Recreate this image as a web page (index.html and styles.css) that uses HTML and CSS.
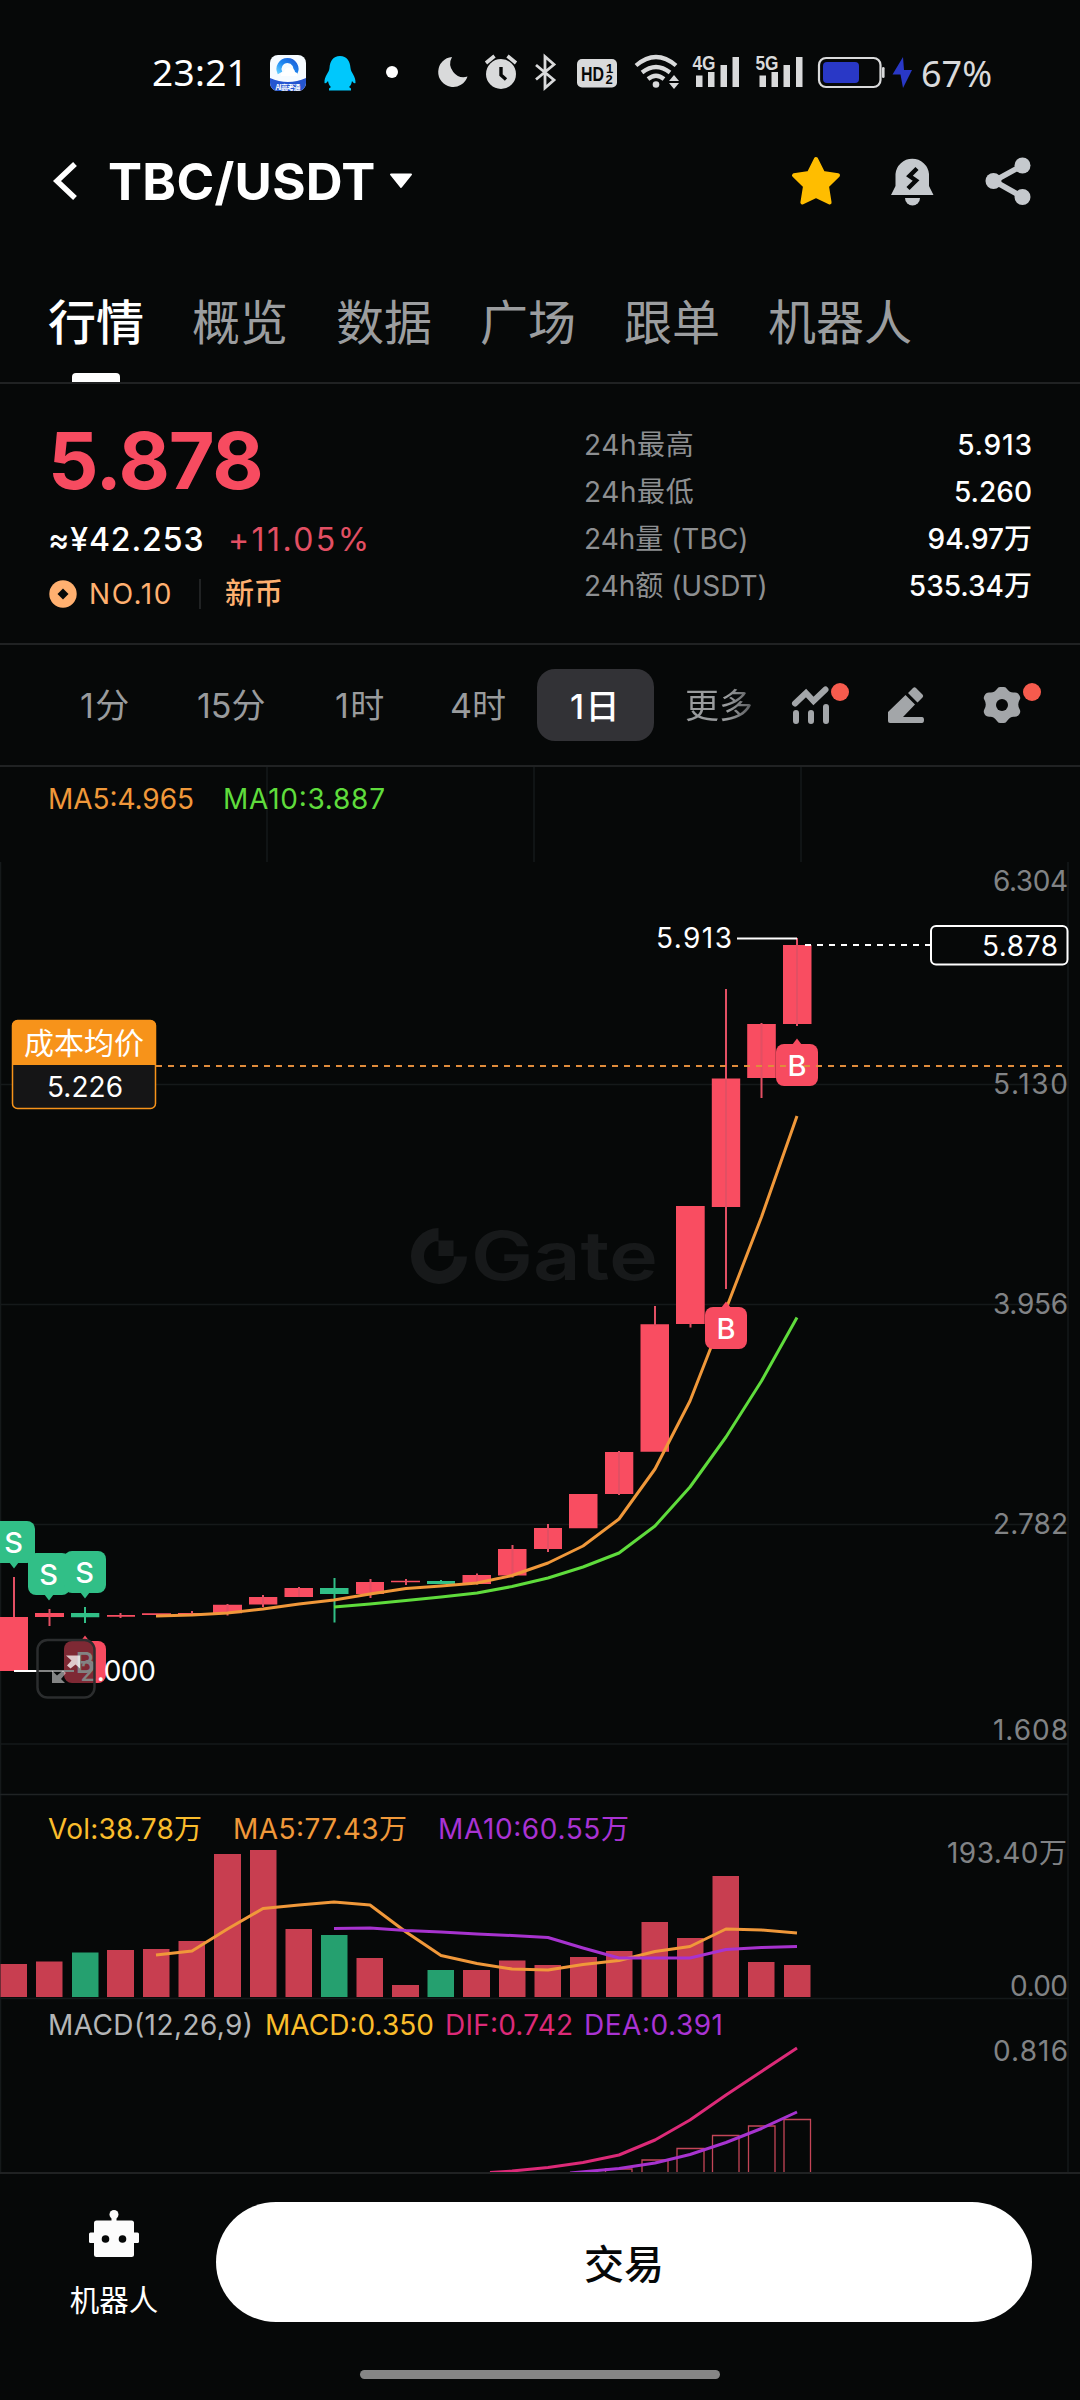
FILE: index.html
```html
<!DOCTYPE html>
<html lang="zh-CN">
<head>
<meta charset="utf-8">
<title>TBC/USDT</title>
<link rel="stylesheet" href="styles.css">
</head>
<body>
<div class="screen">
  <header class="status">
    <span class="clock">23:21</span>
    <svg class="status-icons" viewBox="260 50 660 44" width="660" height="44">
      <defs>
        <linearGradient id="ring" x1="0" y1="1" x2="1" y2="0"><stop offset="0" stop-color="#5cc8ff"/><stop offset=".5" stop-color="#1d86f0"/><stop offset="1" stop-color="#1c5fd8"/></linearGradient>
        <clipPath id="app"><rect x="270" y="55" width="36" height="36" rx="8"/></clipPath>
      </defs>
      <g clip-path="url(#app)">
        <rect x="270" y="55" width="36" height="36" fill="#f6fbff"/>
        <path d="M270 78q18 8 36 0v13h-36z" fill="#2455d0"/>
        <path d="M280 73a8.500 8.500 0 1 1 15 0" fill="none" stroke="url(#ring)" stroke-width="5"/>
        <path d="M281 76q-1-4 3-4 2-6 7-4 4 1 4 4 4 1 2 4z" fill="#fff"/>
        <text x="275.500" y="89.500" class="app-label" textLength="25">AI高考通</text>
      </g>
      <path d="M340 56c7 0 10 5 10.500 12 .4 5 5.500 8 5 15-1.500 1-2.500-1-3.500-2-.5 3-1.500 5-3 6l2 1.500v2h-22v-2l2-1.500c-1.500-1-2.500-3-3-6-1 1-2 3-3.500 2-.5-7 4.600-10 5-15C330 61 333 56 340 56z" fill="#00c8fc"/>
      <circle cx="392" cy="72" r="6" fill="#fff"/>
      <g fill="#d9dadb">
        <path d="M452 57a15 15 0 1 0 15.500 19.500A13.500 13.500 0 0 1 452 57z"/>
        <circle cx="501" cy="74" r="15"/>
        <path d="M486 63l8.500-7M516 63l-8.500-7" stroke="#d9dadb" stroke-width="3.600"/>
        <path d="M501 67v8l5 4.500" fill="none" stroke="#060808" stroke-width="3.400"/>
        <path d="M536 65l18 15-9 8V56.500l9 8-18 15" fill="none" stroke="#d9dadb" stroke-width="2.800"/>
        <rect x="577" y="59" width="40" height="28.500" rx="5"/>
        <g fill="none" stroke="#d9dadb" stroke-width="4.200">
          <path d="M636 65.500q20-17 40 0M642 72.500q14-11 28 0M648 79q8-6.500 16 0"/>
        </g>
        <circle cx="656" cy="84.500" r="3.300"/>
        <path d="M669 81l5-6 5 6zM669 83l5 6 5-6z"/>
        <path d="M696 75.500h6.500V87H696zM708 72h6.500v15H708zM720.500 65h6.500v22h-6.500zM732.500 57h6.500v30h-6.500zM759.500 75.500h6.500V87h-6.500zM771.500 72h6.500v15h-6.500zM783.500 65h6.500v22h-6.500zM796 57h6.500v30H796z"/>
        <text x="692.500" y="69.500" class="net" textLength="23" lengthAdjust="spacingAndGlyphs">4G</text>
        <text x="755.500" y="69.500" class="net" textLength="23" lengthAdjust="spacingAndGlyphs">5G</text>
      </g>
      <text x="581" y="81" class="hd" textLength="23" lengthAdjust="spacingAndGlyphs">HD</text>
      <text x="606" y="73" class="hd-num">1</text><text x="605.500" y="84" class="hd-num">2</text>
      <rect x="819" y="58" width="61.500" height="29" rx="7" fill="none" stroke="#d9dadb" stroke-width="2.200"/>
      <rect x="823" y="62" width="36" height="21" rx="4" fill="#2938c6"/>
      <rect x="882" y="67" width="2.600" height="11" rx="1.300" fill="#d9dadb"/>
      <path d="M903 57l-10.500 17.500h8L903 88l9-18h-8z" fill="#2938c6"/>
    </svg>
    <span class="percent">67%</span>
  </header>

  <nav class="titlebar">
    <svg class="back" viewBox="0 0 28 42" width="28" height="42"><path d="M24 4L6 21l18 17" fill="none" stroke="#fff" stroke-width="5.500"/></svg>
    <h1 class="pair">TBC/USDT</h1>
    <svg class="caret" viewBox="0 0 24 16" width="24" height="16"><path d="M2 1.500h20L12 14z" fill="#fff" stroke="#fff" stroke-width="2" stroke-linejoin="round"/></svg>
    <svg class="star" viewBox="0 0 50 50" width="50" height="50"><path d="M25 3l7 14 15 2.300-11 10.900 2.600 16.300L25 40l-13.600 6.500L14 30.200 3 19.300 18 17z" fill="#ffbd00" stroke="#ffbd00" stroke-width="4" stroke-linejoin="round"/></svg>
    <svg class="bell" viewBox="0 0 44 50" width="44" height="50"><path d="M5.500 18a16.800 16.500 0 0 1 33.500 0v12l4.500 9H1l4.500-9z" fill="#c5c9cd"/><path d="M15 42h15a7.500 7.500 0 0 1-15 0z" fill="#c5c9cd"/><path d="M27 12.500L19.500 20l6.500 4.500-8 8" fill="none" stroke="#060808" stroke-width="4.400"/></svg>
    <svg class="share" viewBox="0 0 46 50" width="46" height="50"><path d="M37.500 9.500L9 25l28.500 16" fill="none" stroke="#c5c9cd" stroke-width="5.500"/><g fill="#c5c9cd"><circle cx="37.500" cy="9.500" r="8"/><circle cx="8.500" cy="25" r="8"/><circle cx="37.500" cy="41" r="8"/></g></svg>
  </nav>

  <nav class="tabs">
    <span class="tab active">行情</span><span class="tab">概览</span><span class="tab">数据</span><span class="tab">广场</span><span class="tab">跟单</span><span class="tab">机器人</span>
  </nav>

  <section class="summary">
    <div class="quote">
      <div class="price">5.878</div>
      <div class="sub"><span class="fiat">≈¥42.253</span><span class="change">+11.05%</span></div>
      <div class="tags">
        <svg viewBox="0 0 28 28" width="28" height="28"><circle cx="14" cy="14" r="13.700" fill="#ffb070"/><path d="M14 8.500l5.500 5.500-5.500 5.500L8.500 14z" fill="#060808"/></svg>
        <span class="rank">NO.10</span><i class="divider"></i><span class="fresh">新币</span>
      </div>
    </div>
    <dl class="stats">
      <div><dt>24h最高</dt><dd class="wide">5.913</dd></div>
      <div><dt>24h最低</dt><dd>5.260</dd></div>
      <div><dt>24h量 (TBC)</dt><dd>94.97万</dd></div>
      <div><dt>24h额 (USDT)</dt><dd>535.34万</dd></div>
    </dl>
  </section>

  <section class="periods">
    <span class="period p1">1分</span><span class="period p2">15分</span><span class="period p3">1时</span><span class="period p4">4时</span><span class="period on">1日</span><span class="period more">更多</span>
    <svg class="tools" viewBox="780 675 270 60" width="270" height="60">
      <g fill="none" stroke="#a3a6a9" stroke-width="6" stroke-linecap="round" stroke-linejoin="miter">
        <path d="M795 703.500l11-10.500 7.500 8 12-11.500"/>
        <path d="M796 713v8M811 713v8M826 707v14"/>
      </g>
      <circle cx="840" cy="692" r="9" fill="#f65b4d"/>
      <path d="M888 712l17.500-17 9.500 9.500-12 12.500h19q2 0 2 3t-2 3h-32q-2 0-2-2zM908 693l5-5q1.500-1.500 3 0l6.500 6.500q1.500 1.500 0 3l-5 5z" fill="#a3a6a9"/>
      <path d="M997 689q1-2 3-2h4q2 0 3 2 3 4 7 3.500 4-.5 5.500 3 1.500 2.500 0 4.500-2.500 4.500 0 9 1.500 2.500 0 5-1.500 3-5.500 2.700-4-.2-7 4.300-1 2-3 2h-4q-2 0-3-2-3-4.500-7-4.300-4 .3-5.500-2.700-1.500-2.500 0-5 2.500-4.500 0-9-1.500-2 0-4.500 1.500-3.500 5.500-3 4 .5 7-3.500z" fill="#a3a6a9"/>
      <circle cx="1002" cy="705" r="6" fill="#060808"/>
      <circle cx="1032" cy="692" r="9" fill="#f65b4d"/>
    </svg>
  </section>

  <svg class="chart" viewBox="0 767 1080 1405" width="1080" height="1405">
    <g class="grid">
      <path d="M267 767v95M534 767v95M801 767v95M.5 862v1310M1068 862v1310M0 1084.500h1068M0 1304.500h1068M0 1524.500h1068M0 1744h1068M0 1998.500h1068"/>
      <path d="M0 1794.500h1068" class="strong"/>
    </g>
    <g class="mark">
      <path d="M438.500 1228a28 28 0 1 0 28.500 28.500h-13a15 15 0 1 1-15.500-15.500zM438.500 1240.500h15v15.500h-15z"/>
      <text x="471" y="1280" textLength="187" lengthAdjust="spacingAndGlyphs">Gate</text>
    </g>

    <g class="up">
      <path d="M0 1617h28v54H0zM35 1613h29v4H35zM107 1615h28v1.800h-28zM142 1613.200h29v1.800h-29zM178 1613h28v1.500h-28zM213 1604.700h29v8.600h-29zM249 1597h28.300v7.500H249zM284.500 1588h28.500v9h-28.500zM356 1582h28v12h-28zM391 1580.800h29v1.500h-29zM462.500 1575h28.500v9h-28.500zM498 1549h28.500v26.500H498zM534 1528h28v21h-28zM569 1494h28.500v34.300H569zM605 1452h28.300v42H605zM640.500 1324.300H669v127.500h-28.500zM676 1206h28.700v118H676zM711.800 1078.500h28.400v128.500h-28.400zM747.200 1024h28.600v54h-28.600zM783 945h28.500v79H783z"/>
      <path class="wick" d="M14 1577v40M49.500 1609v17M120.500 1613v5M192 1611v3M227.500 1604v11.500M263 1595v12M299 1587v10M370.500 1579v19M406 1579v6M477 1573.500v11M512.500 1545v32.500M548 1524v28M619 1451v44M655 1306v20M690.500 1322v5.500M726 989v300M761.500 1023v75M797 938v88"/>
    </g>
    <g class="down">
      <path d="M71 1613h28.300v4.300H71zM320 1588h28.500v6H320zM427 1581h28v3h-28z"/>
      <path class="wick" d="M85 1607v16M334.500 1578v44.500M441 1580v4"/>
    </g>
    <polyline class="ma5" points="156,1616 192,1615 227.5,1613 263,1609 299,1604 334,1600 370,1594 406,1588.5 441,1586 477,1583 512,1575.500 548,1563 583,1546 619,1519 655,1469 690,1401 726,1309 761.5,1217 797,1116"/>
    <polyline class="ma10" points="334,1607 370,1604 406,1600.5 441,1597 477,1593 512,1586.5 548,1578 583,1567 619,1553 655,1526 690,1487 726,1437 761.5,1381 797,1317.500"/>

    <g class="axis">
      <text x="993" y="891" textLength="75">6.304</text><text x="993" y="1094" textLength="75">5.130</text><text x="993" y="1314" textLength="75">3.956</text><text x="993" y="1534" textLength="75">2.782</text><text x="993" y="1740" textLength="75">1.608</text>
      <text x="947" y="1862.500" textLength="120">193.40万</text><text x="1010" y="1995.500" textLength="58">0.00</text><text x="993" y="2060.500" textLength="75">0.816</text>
    </g>

    <g class="legend">
      <text x="48" y="809" textLength="146" class="c-orange">MA5:4.965</text><text x="223" y="809" textLength="162" class="c-green">MA10:3.887</text>
      <text x="48" y="1839" textLength="154" class="c-gold">Vol:38.78万</text><text x="233" y="1839" textLength="174" class="c-orange">MA5:77.43万</text><text x="438" y="1839" textLength="191" class="c-violet">MA10:60.55万</text>
      <text x="48" y="2035" textLength="205" class="c-gray">MACD(12,26,9)</text><text x="265" y="2035" textLength="169" class="c-gold">MACD:0.350</text><text x="445" y="2035" textLength="128" class="c-pink">DIF:0.742</text><text x="584" y="2035" textLength="139" class="c-violet">DEA:0.391</text>
    </g>

    <g class="buy"><rect x="776" y="1044" width="42" height="42" rx="8"/><path d="M792 1045l5-6.500 5 6.500z"/><rect x="705" y="1307" width="42" height="42" rx="8"/><path d="M721 1308l5-6.500 5 6.500z"/><rect x="64" y="1641" width="42" height="42" rx="8"/><path d="M80 1642l5-6.500 5 6.500z"/></g>
    <g class="sell"><rect x="-7" y="1521" width="42" height="42" rx="8"/><path d="M9 1562l5 6.500 5-6.500z"/><rect x="28" y="1553" width="42" height="42" rx="8"/><path d="M44 1594l5 6.500 5-6.500z"/><rect x="64" y="1551" width="42" height="42" rx="8"/><path d="M80 1592l5 6.500 5-6.500z"/></g>
    <path class="cost-line" d="M156 1066H1065"/>
    <g class="letter"><text x="797" y="1076">B</text><text x="726" y="1339">B</text><text x="85" y="1673">B</text><text x="13.500" y="1552.500">S</text><text x="48.500" y="1584.500">S</text><text x="84.500" y="1582.500">S</text></g>

    <rect x="12.500" y="1020.500" width="143" height="88" rx="5" class="cost-box"/>
    <path d="M12.500 1065v-39.500q0-5 5-5h133q5 0 5 5V1065z" fill="#f7931a"/>
    <text x="24" y="1054" class="cost-title" textLength="120">成本均价</text>
    <text x="47" y="1097" class="num" textLength="76">5.226</text>

    <path d="M737 938.500h60M14 1671h60" stroke="#fff" stroke-width="2"/>
    <text x="656" y="948" class="num" textLength="76">5.913</text>
    <text x="80" y="1681" class="num" textLength="76">2.000</text>
    <path d="M805 945h125" stroke="#fff" stroke-width="2" stroke-dasharray="6 6"/>
    <rect x="931" y="926" width="136.500" height="38.500" rx="5" class="last-box"/>
    <text x="982" y="956" class="num" textLength="76">5.878</text>

    <rect x="37.500" y="1640" width="57" height="57.500" rx="10" class="expand"/>
    <path d="M66 1655.500h14v13l-4.500-4-5 4-3.500-3 4.500-5z" fill="#fff" opacity=".75"/>
    <path d="M52 1670.500v12.500h13l-4-4 5-6-3-2.500-6 5z" fill="#fff" opacity=".5"/>

    <path class="vol-up" d="M.5 1964h26.500v33H.5zM36 1961.500h26.500v35.500H36zM107 1950h27v47h-27zM143 1949h26.500v48H143zM178.500 1941H205v56h-26.500zM214 1854h27v143h-27zM250 1850h26.500v147H250zM285.500 1929H312v68h-26.500zM356.500 1958H383v39h-26.500zM392 1985h27v12h-27zM463 1970h27v27h-27zM499 1960.500h26.500v36.500H499zM534.500 1965H561v32h-26.500zM570 1957h27v40h-27zM606 1951h26.500v46H606zM641.500 1922H668v75h-26.500zM677 1938h26.500v59H677zM712.500 1876H739v121h-26.500zM748 1962h26.500v35H748zM784 1965h26.500v32H784z"/>
    <path class="vol-down" d="M72 1952.500h26.500v44.500H72zM321 1935h26.500v62H321zM427.500 1970H454v27h-26.500z"/>
    <polyline class="ma5" points="156,1955 192,1951 227.5,1929 263,1908.500 299,1905 334,1902 370,1905 406,1932 441,1955.500 477,1963.500 512,1969 548,1970 583,1964.500 619,1960.500 655,1951.500 690,1946.500 726,1929 761.5,1930 797,1933"/>
    <polyline class="violet-line" points="334,1928.500 370,1928 406,1930.500 441,1932 477,1934 512,1935.500 548,1937.500 583,1948 619,1958 655,1958 690,1958 726,1949.500 761.5,1947.500 797,1946.500"/>

    <path class="hist" d="M605.500 2175v-6H632v6M642 2175v-15h26v15M677 2175v-26.500h27V2175M712.500 2175v-39.500H739v39.500M748.500 2175v-49H775v49M784 2175v-55.500h26.500V2175"/>
    <polyline class="pink-line" points="490,2172.500 512,2171 548,2167.500 583,2162.500 619,2155 655,2140 690,2120 726,2095 761.5,2071.500 797,2048"/>
    <polyline class="violet-line" points="570,2173 619,2168.500 655,2163 690,2154.500 726,2142.500 761.5,2128.500 797,2112"/>
  </svg>

  <footer class="actions">
    <div class="robot">
      <svg viewBox="0 0 50 48" width="50" height="48"><g fill="#fcfcfc"><circle cx="25" cy="4.500" r="4.500"/><path d="M22.500 7h5v5h-5z"/><rect x="5" y="10.500" width="40" height="36.500" rx="2.500"/><rect y="22.500" width="50" height="10.500" rx="1.500"/></g><circle cx="16.500" cy="29" r="3.800" fill="#060808"/><circle cx="33.500" cy="29" r="3.800" fill="#060808"/></svg>
      <span>机器人</span>
    </div>
    <button class="trade">交易</button>
  </footer>
  <div class="home"></div>
</div>
</body>
</html>
```
FILE: styles.css
```css
* { box-sizing: border-box; margin: 0; padding: 0; }
body { background: #060808; color: #fff; font-family: Inter, "Noto Sans CJK SC", sans-serif; }
svg { display: block; flex: none; }
.screen { width: 1080px; height: 2400px; overflow: hidden; display: flex; flex-direction: column; background: #060808; }

.status { height: 144px; display: flex; align-items: center; padding-left: 152px; flex: none; }
.clock { width: 108px; font: 400 37px/44px "Noto Sans", sans-serif; letter-spacing: .3px; }
.percent { font: 400 36px/44px "Noto Sans", sans-serif; color: #d9dadb; padding-top: 3px; padding-left: 1px; letter-spacing: 0; }
.app-label { font: 700 7px "Noto Sans CJK SC", sans-serif; fill: #fff; }
.net { font: 700 20px "Liberation Sans", sans-serif; }
.hd { font: 700 20px "Liberation Sans", sans-serif; fill: #060808; }
.hd-num { font: 700 13px "Liberation Sans", sans-serif; fill: #060808; }

.titlebar { height: 74px; display: flex; align-items: center; padding-left: 51px; flex: none; }
.pair { margin-left: 29px; width: 272px; padding-top: 2px; font-size: 51px; line-height: 60px; font-weight: 700; letter-spacing: .3px; white-space: nowrap; }
.caret { margin-left: 9px; }
.star { margin-left: 378px; }
.bell { margin-left: 49px; }
.share { margin-left: 51px; }

.tabs { height: 166px; padding: 73px 48px 0; display: flex; gap: 48px; border-bottom: 2px solid #202223; flex: none; }
.tab { font-size: 48px; line-height: 64px; color: #9b9d9f; height: 91px; white-space: nowrap; }
.tab.active { color: #fff; font-weight: 500; display: flex; flex-direction: column; align-items: center; justify-content: space-between; }
.tab.active::after { content: ""; width: 48px; height: 9px; border-radius: 4px 4px 0 0; background: #fff; }

.summary { height: 261px; display: flex; justify-content: space-between; padding: 36px 48px 0; border-bottom: 2px solid #202223; flex: none; }
.price { font-size: 79px; line-height: 80px; font-weight: 700; color: #f74b60; letter-spacing: -1.200px; }
.sub { display: flex; margin-top: 20px; line-height: 40px; font-size: 32px; }
.fiat { width: 180px; font-weight: 500; letter-spacing: .9px; }
.change { color: #e24f63; letter-spacing: 2.400px; }
.tags { display: flex; align-items: center; margin-top: 14px; height: 40px; font-size: 28px; line-height: 40px; color: #ffb070; padding-left: 1px; }
.rank { margin-left: 12px; width: 110px; letter-spacing: 1.600px; }
.divider { width: 2px; height: 30px; background: #202223; }
.fresh { margin-left: 24px; font-size: 29px; font-weight: 500; }
.stats { width: 448px; padding-top: 1px; }
.stats div { display: flex; justify-content: space-between; height: 47px; font-size: 28px; line-height: 48px; white-space: nowrap; }
.stats dt { color: #8d8f91; }
.stats div:nth-child(-n+2) dt { letter-spacing: .6px; }
.stats dd { font-weight: 500; }
.stats .wide { letter-spacing: .8px; margin-right: -.8px; }

.periods { height: 122px; display: flex; align-items: center; border-bottom: 2px solid #202223; flex: none; }
.period { font-size: 34px; line-height: 72px; padding-top: 2px; color: #999b9d; white-space: nowrap; }
.p1 { margin-left: 80px; width: 117px; letter-spacing: 1.500px; }
.p2 { width: 138px; }
.p3 { width: 115px; letter-spacing: 1.500px; }
.p4 { width: 87px; }
.on { width: 117px; height: 72px; border-radius: 18px; background: #323236; color: #fff; font-weight: 500; text-align: center; letter-spacing: 1.500px; }
.more { margin-left: 31px; width: 95px; color: transparent; background: linear-gradient(90deg, #999b9d 45%, #4c4e50 72px); background-clip: text; -webkit-background-clip: text; }

.chart { flex: none; font: 28px Inter, "Noto Sans CJK SC", sans-serif; overflow: hidden; }
.grid path { fill: none; stroke: #15191a; stroke-width: 1.500; }
.grid .strong { stroke: #1f2324; }
.mark { fill: #17191a; }
.mark text { font: 600 67px Inter, sans-serif; }
.up { fill: #f94d61; }
.down { fill: #31bf87; }
.wick { stroke-width: 2; stroke: #e24f63; }
.down .wick { stroke: #31bf87; }
.chart polyline { fill: none; stroke-width: 3; stroke-linejoin: round; }
.ma5 { stroke: #f0983a; }
.ma10 { stroke: #5fdc3c; }
.violet-line { stroke: #a733cf; }
.pink-line { stroke: #dc2a78; }
.axis { fill: #818385; }
.num { fill: #fff; }
.c-orange { fill: #f0983a; }
.c-green { fill: #5fdc3c; }
.c-gold { fill: #fabd2c; }
.c-violet { fill: #a933d3; }
.c-gray { fill: #b4b5b6; }
.c-pink { fill: #dc2a78; }
.buy { fill: #f74b60; }
.sell { fill: #31bf87; }
.letter { fill: #fff; font-size: 29px; font-weight: 500; text-anchor: middle; }
.cost-line { stroke: #e08c3c; stroke-width: 2; stroke-dasharray: 6 6; }
.cost-box { fill: #151516; stroke: #f7931a; stroke-width: 1.500; }
.cost-title { font-size: 30px; fill: #fff; }
.last-box { fill: #060808; stroke: #fff; stroke-width: 2; }
.expand { fill: rgba(6, 8, 8, .5); stroke: #2b2d2e; stroke-width: 2.500; }
.vol-up { fill: #c83e50; }
.vol-down { fill: #25a06f; }
.hist { fill: none; stroke: #c34557; stroke-width: 1.300; }

.actions { height: 150px; border-top: 2px solid #202223; display: flex; padding: 28px 48px 0; flex: none; }
.robot { width: 132px; display: flex; flex-direction: column; align-items: center; margin-right: 36px; padding-top: 8px; }
.robot span { margin-top: 22px; font-size: 29.500px; line-height: 40px; }
.trade { flex: 1; height: 120px; border: 0; border-radius: 60px; background: #fff; color: #060808; font: 500 40px Inter, "Noto Sans CJK SC", sans-serif; }
.home { width: 360px; height: 9px; border-radius: 5px; background: #868686; margin: 48px auto 0; }
```
